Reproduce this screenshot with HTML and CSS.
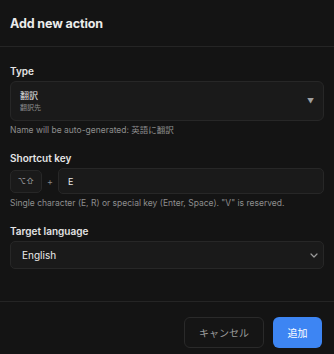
FILE: index.html
```html
<!DOCTYPE html>
<html>
<head>
<meta charset="utf-8">
<link rel="stylesheet" href="styles.css">
</head>
<body>
<div class="dialog">
  <div class="header">
    <h1 class="title">Add new action</h1>
  </div>
  <div class="content">
    <div class="field">
      <div class="label">Type</div>
      <div class="type-select">
        <div class="type-text">
          <div class="type-main">翻訳</div>
          <div class="type-sub">翻訳先</div>
        </div>
        <span class="caret">▼</span>
      </div>
      <div class="hint">Name will be auto-generated: 英語に翻訳</div>
    </div>
    <div class="field">
      <div class="label">Shortcut key</div>
      <div class="shortcut-row">
        <div class="mods">⌥⇧</div>
        <span class="plus">+</span>
        <div class="key-input">E</div>
      </div>
      <div class="hint">Single character (E, R) or special key (Enter, Space). "V" is reserved.</div>
    </div>
    <div class="field">
      <div class="label">Target language</div>
      <div class="lang-select">
        <span>English</span>
        <svg class="chev" width="8" height="5" viewBox="0 0 8 5"><path d="M1 1l3 3 3-3" fill="none" stroke="#9a9a9a" stroke-width="1.2" stroke-linecap="round" stroke-linejoin="round"/></svg>
      </div>
    </div>
  </div>
  <div class="footer">
    <button class="btn btn-cancel">キャンセル</button>
    <button class="btn btn-add">追加</button>
  </div>
</div>
</body>
</html>
```
FILE: styles.css
```css
html, body {
  margin: 0;
  padding: 0;
  background: #141414;
}
body {
  font-family: Inter, "Noto Sans CJK JP", sans-serif;
  color: #e6e6e6;
  width: 334px;
  height: 354px;
  overflow: hidden;
}
.dialog {
  display: flex;
  flex-direction: column;
}
.header {
  height: 46px;
  display: flex;
  align-items: center;
  padding: 0 10px;
  border-bottom: 1px solid #252525;
}
.title {
  margin: 0;
  font-size: 12.5px;
  font-weight: 700;
  color: #ececec;
  letter-spacing: -0.1px;
}
.content {
  padding: 17px 10px 0 10px;
  display: flex;
  flex-direction: column;
  gap: 15px;
  height: 255px;
  box-sizing: border-box;
  border-bottom: 1px solid #252525;
}
.field {
  display: flex;
  flex-direction: column;
}
.label {
  font-size: 10px;
  font-weight: 600;
  line-height: 14px;
  color: #e4e4e4;
  margin-bottom: 3px;
}
.type-select {
  height: 40px;
  box-sizing: border-box;
  border: 1px solid #272727;
  border-radius: 6px;
  background: #1a1a1a;
  display: flex;
  align-items: center;
  padding: 0 9px;
}
.type-text {
  flex: 1;
  display: flex;
  flex-direction: column;
  gap: 1px;
}
.type-main {
  font-size: 9px;
  line-height: 13px;
  color: #e8e8e8;
}
.type-sub {
  font-size: 7px;
  line-height: 10px;
  color: #8c8c8c;
}
.caret {
  font-size: 7px;
  color: #a0a0a0;
}
.hint {
  font-size: 8.5px;
  line-height: 12px;
  color: #8e8e8e;
  margin-top: 3px;
}
.shortcut-row {
  display: flex;
  align-items: center;
  height: 26px;
}
.mods {
  width: 32px;
  height: 23px;
  box-sizing: border-box;
  border: 1px solid #272727;
  border-radius: 5px;
  background: #1a1a1a;
  display: flex;
  align-items: center;
  justify-content: center;
  font-size: 8px;
  color: #9a9a9a;
}
.plus {
  width: 16px;
  text-align: center;
  font-size: 9px;
  color: #8a8a8a;
}
.key-input {
  flex: 1;
  height: 26px;
  box-sizing: border-box;
  border: 1px solid #272727;
  border-radius: 5px;
  background: #1a1a1a;
  display: flex;
  align-items: center;
  padding: 0 9px;
  font-size: 9px;
  color: #e8e8e8;
}
.lang-select {
  height: 28px;
  box-sizing: border-box;
  border: 1px solid #272727;
  border-radius: 5px;
  background: #1a1a1a;
  display: flex;
  align-items: center;
  justify-content: space-between;
  padding: 0 5px 0 11px;
  font-size: 10px;
  color: #ececec;
}
.footer {
  display: flex;
  justify-content: flex-end;
  gap: 9px;
  padding: 15px 12px 0 0;
}
.btn {
  height: 31px;
  border-radius: 6px;
  font-family: Inter, "Noto Sans CJK JP", sans-serif;
  font-size: 10px;
  cursor: pointer;
}
.btn-cancel {
  width: 80px;
  background: #151515;
  border: 1px solid #2a2a2a;
  color: #9c9c9c;
}
.btn-add {
  width: 49px;
  background: #3d85f3;
  border: none;
  color: #ffffff;
}
```
